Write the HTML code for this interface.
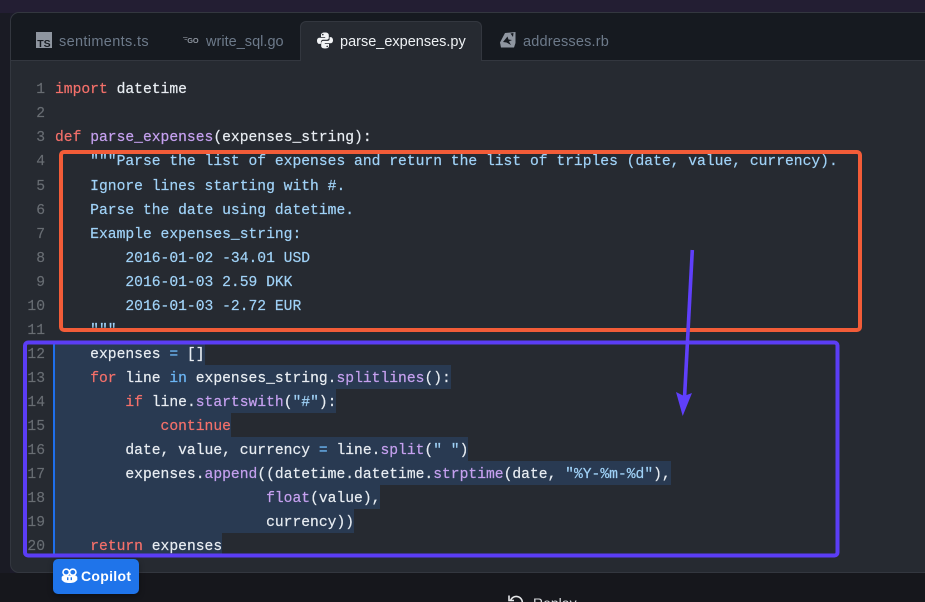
<!DOCTYPE html>
<html><head><meta charset="utf-8">
<style>
html,body{margin:0;padding:0;width:925px;height:602px;overflow:hidden}
body{font-family:"Liberation Sans",sans-serif}
#wrap{position:absolute;left:0;top:0;width:925px;height:602px;overflow:hidden;background:linear-gradient(90deg,#1c1b2a 0,#1a1b23 100%);contain:paint}
#top{position:absolute;left:0;top:0;width:925px;height:13px;background:#231e33}
#under{position:absolute;left:0;top:573px;width:925px;height:29px;background:#16171c}
#side{position:absolute;left:0;top:13px;width:10px;height:560px;background:#1a1b24}
#card{position:absolute;left:10px;top:12px;width:930px;height:561px;box-sizing:border-box;background:#262a31;border:1px solid #33373f;border-radius:9px;overflow:hidden}
#bar{position:absolute;left:0;top:0;right:0;height:47px;background:#161a20;border-bottom:1px solid #33373f}
#atab{position:absolute;left:289px;top:8px;width:182px;height:40px;box-sizing:border-box;background:#262a31;border:1px solid #33373f;border-bottom:none;border-radius:6px 6px 0 0}
.t{position:absolute;top:33px;font-size:14.5px;line-height:18px;color:#6d7a8a;white-space:nowrap}
.row{position:absolute;left:55px;height:24.05px;line-height:28.05px;white-space:pre;font-family:"Liberation Mono",monospace;font-size:14.67px;color:#e8edf2;-webkit-text-stroke:.2px currentColor;overflow:hidden}
.hl{background:#293a52}
.n{position:absolute;width:45px;left:0;text-align:right;height:24.05px;line-height:28.05px;font-family:"Liberation Mono",monospace;font-size:14.67px;color:#686d73;-webkit-text-stroke:.15px currentColor}
i{font-style:normal}
.k{color:#f4706a}.f{color:#c5a0ef}.s{color:#a0d2f7}.o{color:#6cb6f5}
#cop{position:absolute;left:53px;top:559px;width:86px;height:35px;background:#1f74ea;border-radius:5px;color:#fff;font-weight:700;font-size:14px;line-height:35px;box-shadow:0 2px 6px rgba(0,0,0,.35)}
#cop span{position:absolute;left:28px;top:0;letter-spacing:.3px}
#rep{position:absolute;left:533px;top:594px;font-size:14px;line-height:18px;color:#d8dadd}
svg{position:absolute}
</style></head><body><div id="wrap">
<div id="top"></div><div id="side"></div><div id="under"></div>
<div id="card"><div id="bar"></div><div id="atab"></div></div>

<svg style="left:36px;top:32px" width="16" height="17" viewBox="0 0 16 17"><rect width="16" height="16" fill="#8f96a0"/><text x="1.2" y="15" font-family="Liberation Sans" font-weight="700" font-size="10.5" fill="#161a20">TS</text></svg>
<div class="t" style="left:59px;letter-spacing:.35px">sentiments.ts</div>
<svg style="left:183px;top:34px" width="18" height="12" viewBox="0 0 18 12"><path d="M0 3.6H4.5M1.5 5.6H4" stroke="#7a8088" stroke-width=".8"/><text x="4.2" y="8.8" font-family="Liberation Sans" font-weight="700" font-size="7.4" fill="#8f96a0">GO</text></svg>
<div class="t" style="left:206px;letter-spacing:.02px">write_sql.go</div>
<svg style="left:317px;top:32px" width="16" height="17" viewBox="0 0 16 16"><path d="M8 0C5 0 4 1 4 2.6V4.5H8.2V5.2H2.4C1 5.2 0 6.3 0 8.2S1 11.4 2.4 11.4H3.9V9.3C3.9 8 5 7.2 6 7.2H10C11.1 7.2 11.8 6.4 11.8 5.4V2.6C11.8 1 10.6 0 8 0ZM5.8 1.3A.8.8 0 1 1 5.8 2.9.8.8 0 0 1 5.8 1.3Z" fill="#f2f4f6"/><path d="M8 16C11 16 12 15 12 13.4V11.5H7.8V10.8H13.6C15 10.8 16 9.7 16 7.8S15 4.6 13.6 4.6H12.6V6.7C12.6 8 11 8.4 10 8.4H6C4.9 8.4 4.2 9.6 4.2 10.6V13.4C4.2 15 5.4 16 8 16ZM10.2 14.7A.8.8 0 1 1 10.2 13.1.8.8 0 0 1 10.2 14.7Z" fill="#f2f4f6"/></svg>
<div class="t" style="left:340px;color:#eef1f4;letter-spacing:0">parse_expenses.py</div>
<svg style="left:500px;top:32px" width="16" height="16" viewBox="0 0 16 16"><path d="M5 1L15.5 0V11L14 15.5H1L0 10.5Z" fill="#8f96a0"/><path d="M3 10L7.5 4.5 8.5 7.5 12 8 9 9.5 11 13 6.5 10.5Z M10.5 1.5L13.5 1 13 5Z" fill="#161a20"/></svg>
<div class="t" style="left:523px;letter-spacing:.18px">addresses.rb</div>

<div class="n" style="top:76.3px">1</div>
<div class="n" style="top:100.35px">2</div>
<div class="n" style="top:124.4px">3</div>
<div class="n" style="top:148.45px">4</div>
<div class="n" style="top:172.5px">5</div>
<div class="n" style="top:196.55px">6</div>
<div class="n" style="top:220.6px">7</div>
<div class="n" style="top:244.65px">8</div>
<div class="n" style="top:268.7px">9</div>
<div class="n" style="top:292.75px">10</div>
<div class="n" style="top:316.8px">11</div>
<div class="n" style="top:340.85px">12</div>
<div class="n" style="top:364.9px">13</div>
<div class="n" style="top:388.95px">14</div>
<div class="n" style="top:413px">15</div>
<div class="n" style="top:437.05px">16</div>
<div class="n" style="top:461.1px">17</div>
<div class="n" style="top:485.15px">18</div>
<div class="n" style="top:509.2px">19</div>
<div class="n" style="top:533.25px">20</div>

<div class="row" style="top:76.3px"><i class="k">import</i> datetime</div>
<div class="row" style="top:124.4px"><i class="k">def</i> <i class="f">parse_expenses</i>(expenses_string):</div>
<div class="row s" style="top:148.45px">    """Parse the list of expenses and return the list of triples (date, value, currency).</div>
<div class="row s" style="top:172.5px">    Ignore lines starting with #.</div>
<div class="row s" style="top:196.55px">    Parse the date using datetime.</div>
<div class="row s" style="top:220.6px">    Example expenses_string:</div>
<div class="row s" style="top:244.65px">        2016-01-02 -34.01 USD</div>
<div class="row s" style="top:268.7px">        2016-01-03 2.59 DKK</div>
<div class="row s" style="top:292.75px">        2016-01-03 -2.72 EUR</div>
<div class="row s" style="top:316.8px">    """</div>
<div class="row hl" style="top:340.85px">    expenses <i class="o">=</i> []</div>
<div class="row hl" style="top:364.9px">    <i class="k">for</i> line <i class="o">in</i> expenses_string.<i class="f">splitlines</i>():</div>
<div class="row hl" style="top:388.95px">        <i class="k">if</i> line.<i class="f">startswith</i>(<i class="s">"#"</i>):</div>
<div class="row hl" style="top:413px">            <i class="k">continue</i></div>
<div class="row hl" style="top:437.05px">        date, value, currency <i class="o">=</i> line.<i class="f">split</i>(<i class="s">" "</i>)</div>
<div class="row hl" style="top:461.1px">        expenses.<i class="f">append</i>((datetime.datetime.<i class="f">strptime</i>(date, <i class="s">"%Y-%m-%d"</i>),</div>
<div class="row hl" style="top:485.15px">                        <i class="f">float</i>(value),</div>
<div class="row hl" style="top:509.2px">                        currency))</div>
<div class="row hl" style="top:533.25px">    <i class="k">return</i> expenses</div>
<div style="position:absolute;left:53px;top:341px;width:2px;height:214px;background:#1f6feb"></div>

<svg style="left:0;top:0" width="925" height="602">
<rect x="61" y="152" width="799" height="178" rx="3" fill="none" stroke="#f25c38" stroke-width="4"/>
<rect x="25" y="342.5" width="812.5" height="213" rx="3" fill="none" stroke="#5b3df5" stroke-width="4"/>
<path d="M692.3 250L684.5 398" stroke="#5f3ffb" stroke-width="3.6" fill="none"/>
<path d="M676 392L684 396 692 393 682.7 416Z" fill="#5f3ffb"/>
</svg>

<div id="cop"><svg style="left:8px;top:9px" width="17" height="16" viewBox="0 0 17 16"><ellipse cx="5.2" cy="4.2" rx="3.2" ry="3" fill="none" stroke="#fff" stroke-width="1.6"/><ellipse cx="11.8" cy="4.2" rx="3.2" ry="3" fill="none" stroke="#fff" stroke-width="1.6"/><path d="M2 7.5H15L16.3 9V12L14 14C11 15.4 6 15.4 3 14L.7 12V9Z" fill="#fff"/><rect x="6" y="9.3" width="1.4" height="2.8" fill="#1f74ea"/><rect x="9.6" y="9.3" width="1.4" height="2.8" fill="#1f74ea"/></svg><span>Copilot</span></div>

<svg style="left:508px;top:594px" width="16" height="8" viewBox="0 0 16 8"><path d="M2.5 7A6 6 0 1 1 6 14" fill="none" stroke="#e6e7e9" stroke-width="1.6"/><path d="M1 1.5V6.5H6" fill="none" stroke="#e6e7e9" stroke-width="1.6"/></svg>
<div id="rep">Replay</div>
</div></body></html>
